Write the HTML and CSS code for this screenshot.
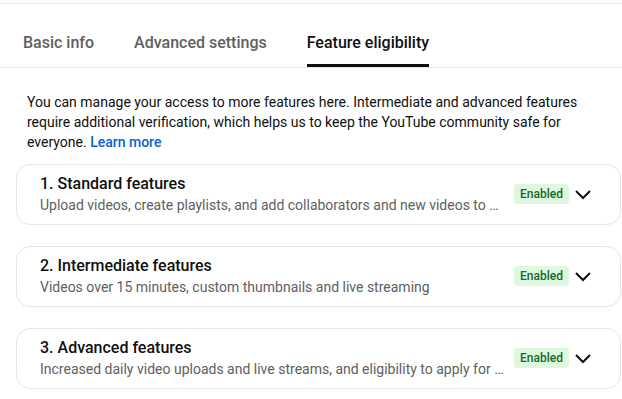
FILE: index.html
```html
<!DOCTYPE html>
<html lang="en">
<head>
    <meta charset="UTF-8">
    <meta name="viewport" content="width=device-width, initial-scale=1.0">
    <title>Feature eligibility</title>
    <link rel="stylesheet" href="styles.css">
</head>
<body>
    <div class="topline"></div>

    <div class="tabs">
        <div class="tab">Basic info</div>
        <div class="tab">Advanced settings</div>
        <div class="tab active">Feature eligibility</div>
    </div>

    <p class="intro">
        You can manage your access to more features here. Intermediate and advanced features
        require additional verification, which helps us to keep the YouTube community safe for
        everyone. <a href="#" class="link">Learn more</a>
    </p>

    <div class="cards">
        <div class="card">
            <div class="card-text">
                <div class="card-title">1. Standard features</div>
                <div class="card-sub">Upload videos, create playlists, and add collaborators and new videos to playlists</div>
            </div>
            <span class="badge">Enabled</span>
            <svg class="chevron" viewBox="0 0 24 24"><polyline points="5,9 12,16 19,9"/></svg>
        </div>

        <div class="card">
            <div class="card-text">
                <div class="card-title">2. Intermediate features</div>
                <div class="card-sub">Videos over 15 minutes, custom thumbnails and live streaming</div>
            </div>
            <span class="badge">Enabled</span>
            <svg class="chevron" viewBox="0 0 24 24"><polyline points="5,9 12,16 19,9"/></svg>
        </div>

        <div class="card">
            <div class="card-text">
                <div class="card-title">3. Advanced features</div>
                <div class="card-sub">Increased daily video uploads and live streams, and eligibility to apply for monetization</div>
            </div>
            <span class="badge">Enabled</span>
            <svg class="chevron" viewBox="0 0 24 24"><polyline points="5,9 12,16 19,9"/></svg>
        </div>
    </div>
</body>
</html>
```

FILE: styles.css
```css
body {
    margin: 0;
    font-family: Roboto, "Liberation Sans", Arial, sans-serif;
    color: #0f0f0f;
    background: #fff;
}
.topline {
    height: 3px;
    border-bottom: 1px solid #e5e5e5;
}
.tabs {
    display: flex;
    gap: 40px;
    padding-left: 23px;
    border-bottom: 1px solid #e5e5e5;
}
.tab {
    font-size: 16px;
    font-weight: 500;
    line-height: 24px;
    color: #606060;
    padding: 27px 0 9px;
    border-bottom: 3px solid transparent;
}
.tab.active {
    color: #0f0f0f;
    border-bottom-color: #0f0f0f;
}
.intro {
    margin: 24px 0 12px;
    padding: 0 27px;
    font-size: 14px;
    line-height: 20px;
}
.link {
    color: #065fd4;
    font-weight: 500;
    text-decoration: none;
}
.cards {
    padding: 0 1px 0 16px;
}
.card {
    display: flex;
    align-items: center;
    border: 1px solid #e5e5e5;
    border-radius: 14px;
    padding: 8px 25px 9px 23px;
    margin-bottom: 21px;
}
.card-text {
    flex: 1;
    min-width: 0;
    margin-right: 8px;
}
.card-title {
    font-size: 16px;
    font-weight: 500;
    line-height: 22px;
}
.card-sub {
    font-size: 14px;
    line-height: 20px;
    color: #606060;
    white-space: nowrap;
    overflow: hidden;
    text-overflow: ellipsis;
}
.badge {
    background: #def8df;
    color: #17692a;
    font-size: 12px;
    font-weight: 500;
    line-height: 20px;
    padding: 0 6px;
    border-radius: 4px;
    margin-right: 2px;
}
.chevron {
    width: 24px;
    height: 24px;
    fill: none;
    stroke: #0f0f0f;
    stroke-width: 2;
}
```
